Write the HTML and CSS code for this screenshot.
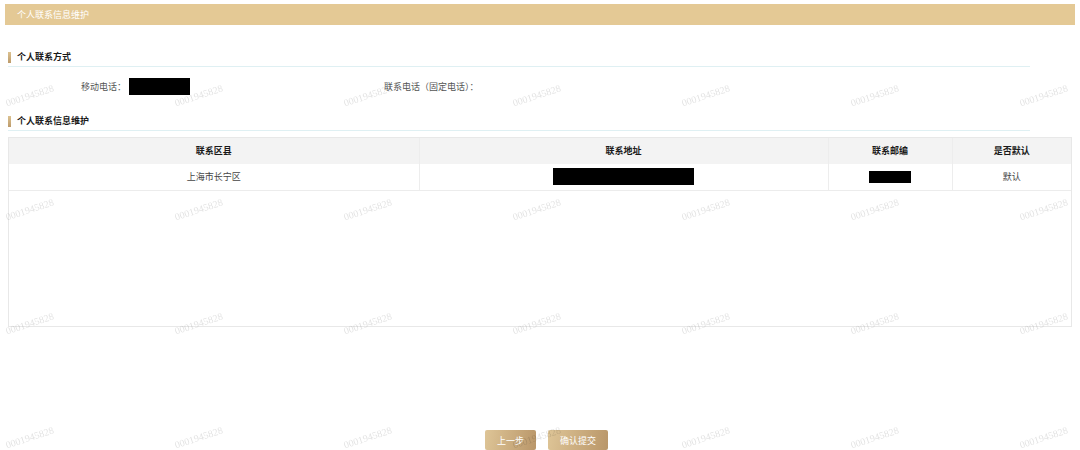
FILE: index.html
```html
<!DOCTYPE html>
<html>
<head>
    <meta charset="utf-8">
    <title>个人联系信息维护</title>
    <link rel="stylesheet" href="styles.css">
</head>

<body>

    <div class='page-head'>个人联系信息维护</div>

    <h3 class='sec-title first'>个人联系方式</h3>
    <div class='field-row'>
        <div class='field'>
            <label>移动电话：</label>
            <span class='mask phone'></span>
        </div>
        <div class='field'>
            <label>联系电话（固定电话）：</label>
        </div>
    </div>

    <h3 class='sec-title'>个人联系信息维护</h3>
    <div class='grid-box'>
        <table>
            <thead>
                <tr>
                    <th class='c1'>联系区县</th>
                    <th class='c2'>联系地址</th>
                    <th class='c3'>联系邮编</th>
                    <th class='c4'>是否默认</th>
                </tr>
            </thead>
            <tbody>
                <tr>
                    <td>上海市长宁区</td>
                    <td><span class='mask addr'></span></td>
                    <td><span class='mask zip'></span></td>
                    <td>默认</td>
                </tr>
            </tbody>
        </table>
    </div>

    <div class='btn-bar'>
        <button>上一步</button>
        <button>确认提交</button>
    </div>

    <!-- 水印 -->
    <div class='watermark'>
        <div class='wm-grid'>
            <span>0001945828</span><span>0001945828</span><span>0001945828</span><span>0001945828</span><span>0001945828</span><span>0001945828</span><span>0001945828</span>
            <span>0001945828</span><span>0001945828</span><span>0001945828</span><span>0001945828</span><span>0001945828</span><span>0001945828</span><span>0001945828</span>
            <span>0001945828</span><span>0001945828</span><span>0001945828</span><span>0001945828</span><span>0001945828</span><span>0001945828</span><span>0001945828</span>
            <span>0001945828</span><span>0001945828</span><span>0001945828</span><span>0001945828</span><span>0001945828</span><span>0001945828</span><span>0001945828</span>
        </div>
    </div>

</body>
</html>
```

FILE: styles.css
```css
*{box-sizing:border-box;  margin:0;  padding:0;  }
html,body{height:100%;  overflow:hidden;  }
body{padding:4px 5px 0 8px;  background:#fff;  color:#444;  font:9px/12px "Noto Sans CJK SC","Liberation Sans",sans-serif;  }

.page-head{margin-left:-3px;  height:21px;  line-height:21px;  padding-left:12px;  background:#e4c995;  color:#fff;  font-size:9px;  }

.sec-title{width:1022px;  height:16px;  padding-left:9px;  margin-top:20px;  position:relative;  border-bottom:1px solid #dff0f3;  font-size:9px;  line-height:12px;  font-weight:bold;  color:#1a1a1a;  }
.sec-title.first{margin-top:26px;  }
.sec-title:before{content:'';  position:absolute;  left:0;  top:1px;  width:3px;  height:11px;  background:linear-gradient(#dcc291,#bd9b6b);  }

.field-row{display:flex;  margin-top:11px;  height:17px;  align-items:center;  }
.field{display:flex;  align-items:center;  }
.field:first-child{width:376px;  }
.field:first-child label{width:118px;  text-align:right;  }
.field label{color:#555;  }

.mask{display:inline-block;  background:#000;  vertical-align:middle;  }
.mask.phone{width:61px;  height:17px;  margin-left:3px;  }
.mask.addr{width:141px;  height:17px;  }
.mask.zip{width:42px;  height:12px;  }

.grid-box{width:1064px;  height:190px;  margin-top:6px;  border:1px solid #e8e8e8;  }
table{width:100%;  border-collapse:collapse;  }
th,td{height:26px;  text-align:center;  border-left:1px solid #ededed;  font-size:9px;  }
th:first-child,td:first-child{border-left:none;  }
th{background:#f3f3f3;  color:#1a1a1a;  font-weight:bold;  }
td{color:#444;  border-bottom:1px solid #ececec;  }
.c1{width:410px;  }
.c2{width:409px;  }
.c3{width:124px;  }

.btn-bar{display:flex;  justify-content:center;  gap:12px;  margin-top:103px;  padding-left:10px;  }
.btn-bar button{height:20px;  width:51px;  border:none;  border-radius:2px;  color:#fff;  font:9px "Noto Sans CJK SC","Liberation Sans",sans-serif;  background:linear-gradient(100deg,#dec597,#b99669);  }
.btn-bar button+button{width:60px;  }

.watermark{position:fixed;  top:0;  left:0;  right:0;  bottom:0;  overflow:hidden;  pointer-events:none;  }
.wm-grid{display:grid;  grid-template-columns:repeat(7,169px);  grid-auto-rows:114px;  margin:38px 0 0 -55px;  }
.wm-grid span{display:flex;  align-items:center;  justify-content:center;  transform:rotate(-18deg);  color:rgba(0,0,0,0.12);  font:10px "Liberation Serif",serif;  }
```
